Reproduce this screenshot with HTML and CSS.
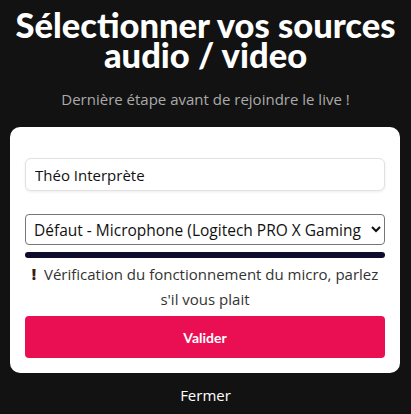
FILE: index.html
```html
<!DOCTYPE html>
<html lang="fr">
<head>
    <meta charset="UTF-8">
    <meta name="viewport" content="width=device-width, initial-scale=1.0">
    <title>Sources audio / video</title>
    <link rel="stylesheet" href="styles.css">
</head>
<body>
    <h1 class="title">Sélectionner vos sources audio / video</h1>
    <p class="subtitle">Dernière étape avant de rejoindre le live !</p>

    <div class="card">
        <input class="field" type="text" value="Théo Interprète">

        <div class="select-wrap">
            <select class="select">
                <option>Défaut - Microphone (Logitech PRO X Gaming Headset)</option>
            </select>
        </div>

        <div class="level"></div>

        <p class="warning"><span class="mark">!</span> Vérification du fonctionnement du micro, parlez s'il vous plait</p>

        <button class="submit" type="button">Valider</button>
    </div>

    <p class="close">Fermer</p>
</body>
</html>
```

FILE: styles.css
```css
body {
    margin: 0;
    background-color: #131212;
    font-family: "Open Sans", "Noto Sans", sans-serif;
    color: #fff;
}
.title {
    margin: 10px 0 0;
    padding: 0 8px;
    text-align: center;
    font-family: Lato, "Open Sans", sans-serif;
    font-weight: 900;
    font-size: 34.5px;
    line-height: 30px;
}
.subtitle {
    margin: 19px 0 18px;
    text-align: center;
    color: #aaa;
    font-size: 15px;
}
.card {
    margin: 0 11px 0 10px;
    padding: 31px 15px 15px;
    background-color: #fff;
    border-radius: 10px;
    color: #333;
}
.field {
    display: block;
    box-sizing: border-box;
    width: 100%;
    height: 33px;
    padding: 0 9px;
    border: 1px solid #e2e2e2;
    border-radius: 6px;
    box-shadow: 0 1px 3px rgba(0, 0, 0, 0.08);
    font-family: "Open Sans", sans-serif;
    font-size: 15px;
    color: #111;
    outline: none;
}
.select-wrap {
    margin-top: 23px;
}
.select {
    display: block;
    box-sizing: border-box;
    width: 100%;
    height: 31px;
    padding: 0 4px;
    border: 1px solid #767676;
    border-radius: 4px;
    background-color: #fff;
    font-family: "Open Sans", sans-serif;
    font-size: 15.5px;
    color: #111;
}
.level {
    height: 6px;
    margin-top: 7px;
    background-color: #0e0c2e;
    border-radius: 3px;
}
.warning {
    margin: 4px 0 0;
    text-align: center;
    font-size: 15px;
    line-height: 25px;
    color: #333;
}
.mark {
    font-weight: 900;
    color: #3a1c14;
    margin-right: 4px;
}
.submit {
    display: block;
    width: 100%;
    height: 42px;
    margin-top: 4px;
    border: none;
    border-radius: 4px;
    background-color: #ea0f52;
    color: #fff;
    font-family: Lato, sans-serif;
    font-weight: 700;
    font-size: 14px;
}
.close {
    margin: 12px 0 0;
    text-align: center;
    font-size: 15px;
    color: #fff;
}
```
